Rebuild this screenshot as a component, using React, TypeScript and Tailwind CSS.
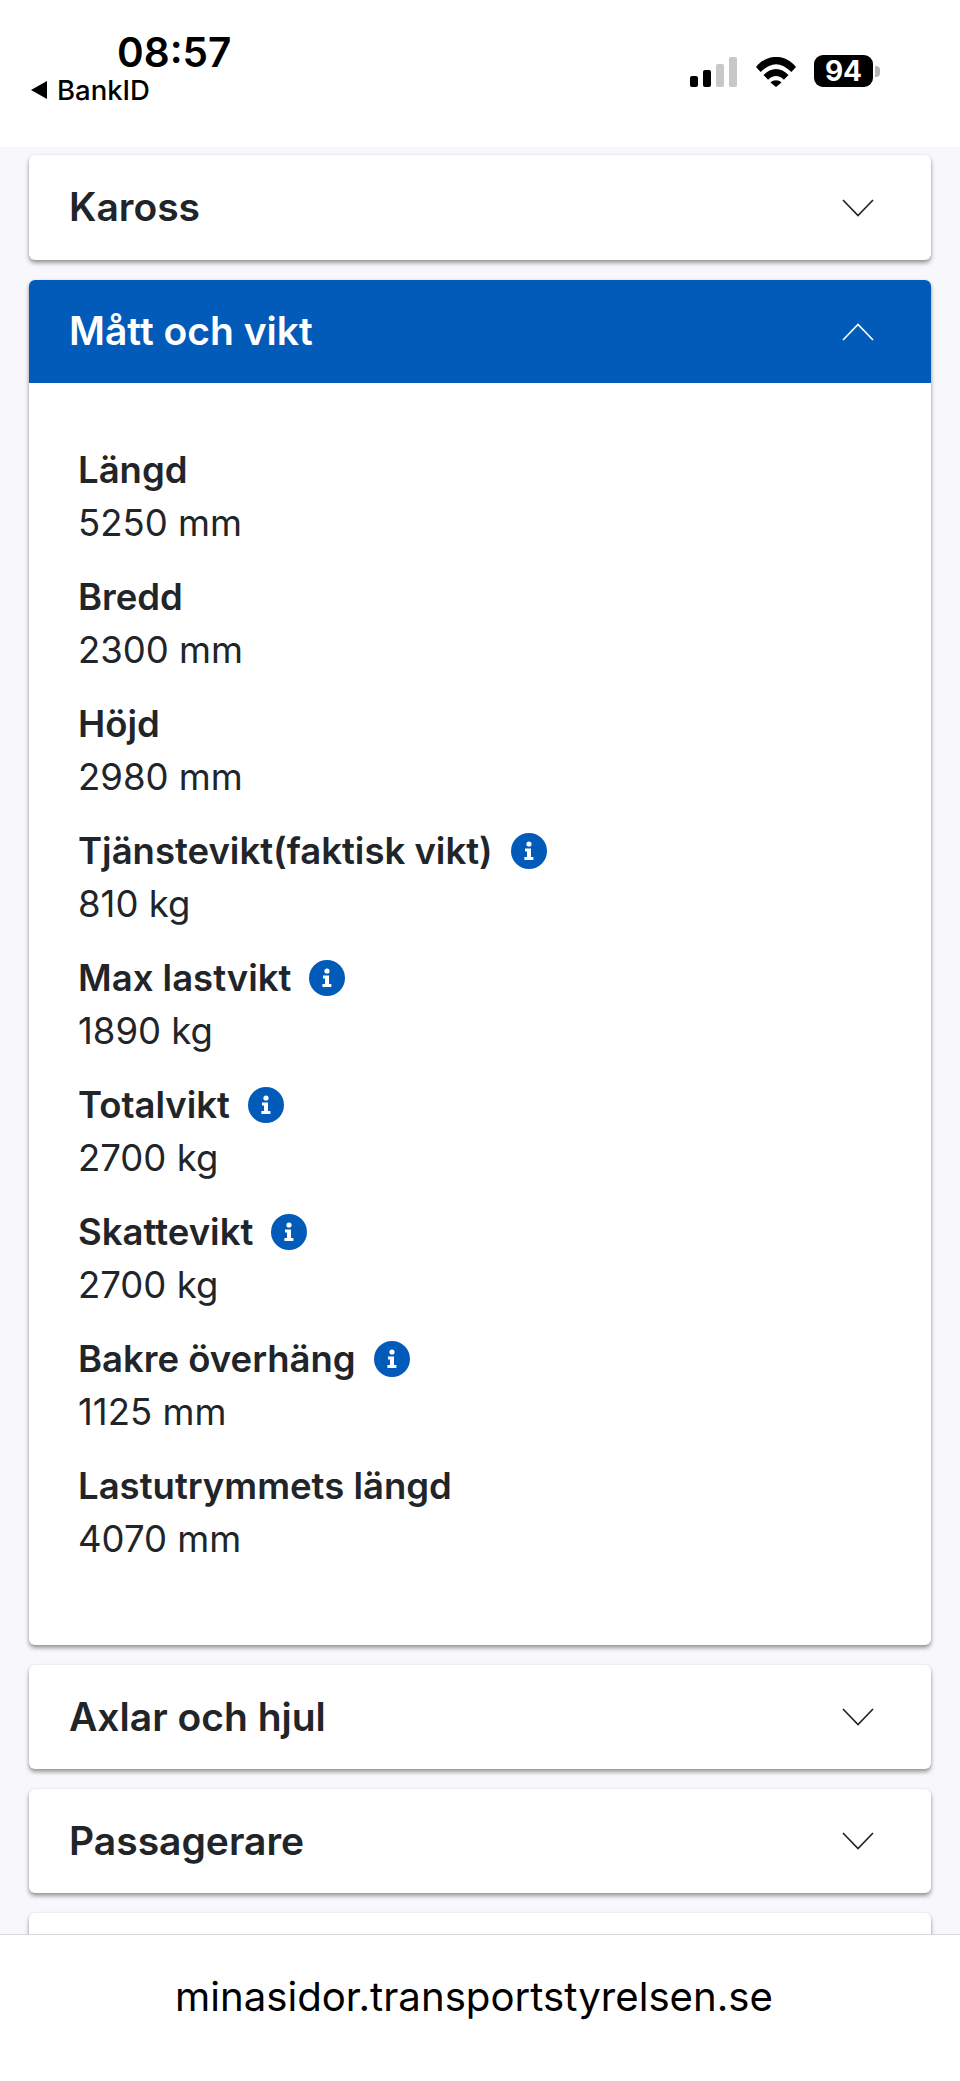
const ROWS = [
  { label: 'Längd', value: '5250 mm' },
  { label: 'Bredd', value: '2300 mm' },
  { label: 'Höjd', value: '2980 mm' },
  { label: 'Tjänstevikt(faktisk vikt)', value: '810 kg', info: true },
  { label: 'Max lastvikt', value: '1890 kg', info: true },
  { label: 'Totalvikt', value: '2700 kg', info: true },
  { label: 'Skattevikt', value: '2700 kg', info: true },
  { label: 'Bakre överhäng', value: '1125 mm', info: true },
  { label: 'Lastutrymmets längd', value: '4070 mm' },
];

function InfoIcon() {
  return (
    <svg viewBox="0 0 36 36" className="ml-[18px] h-[36px] w-[36px] shrink-0">
      <circle cx="18" cy="18" r="18" fill="#025ab9" />
      <circle cx="18" cy="11" r="2.6" fill="#fff" />
      <path d="M14 15.5h6V24h2.4v3h-9v-3H16v-5.5h-2z" fill="#fff" />
    </svg>
  );
}

function Chevron({ up, color }: { up?: boolean; color: string }) {
  return (
    <svg viewBox="0 0 32 18" fill="none" className="h-[18px] w-[32px]">
      <path d={up ? 'M1 17 16 1.500 31 17' : 'M1 1 16 16.500 31 1'} stroke={color} strokeWidth="1.700" />
    </svg>
  );
}

function Collapsed({ title }: { title: string }) {
  return (
    <div className="flex h-[104px] shrink-0 items-center justify-between rounded-[6px] bg-white pl-[40px] pr-[57px] shadow-[0_3px_4px_rgba(0,0,0,0.38),0_0_3px_rgba(0,0,0,0.08)] first:h-[105px]">
      <span className="text-[39px] font-semibold text-[#212529]">{title}</span>
      <Chevron color="#212529" />
    </div>
  );
}

export default function App() {
  return (
    <div className="flex h-[2081px] w-[960px] flex-col overflow-hidden bg-[#f8f8fc] font-['Inter',sans-serif]">
      {/* Status bar */}
      <div className="flex h-[147px] shrink-0 items-start justify-between bg-white pl-[31px] pr-[80px]">
        <div className="pt-[30px]">
          <div className="pl-[86px] text-[40.5px] leading-[46px] font-semibold text-black">08:57</div>
          <div className="-mt-[1px] flex items-center gap-[10px] text-[27.5px] leading-[30px] font-medium text-black">
            <span className="h-0 w-0 border-y-[9px] border-r-[16px] border-y-transparent border-r-black" />
            BankID
          </div>
        </div>
        <div className="flex items-end pt-[55px]">
          <div className="flex items-end gap-[5px]">
            <span className="h-[11px] w-[8px] rounded-[2px] bg-black" />
            <span className="h-[17px] w-[8px] rounded-[2px] bg-black" />
            <span className="h-[23px] w-[8px] rounded-[2px] bg-[#c8c8c8]" />
            <span className="h-[30px] w-[8px] rounded-[2px] bg-[#c8c8c8]" />
          </div>
          <svg viewBox="0 0 40 30" className="ml-[19px] h-[30px] w-[40px]">
            <path d="M0 10C11-3.500 29-3.500 40 10l-4.600 5C25 4.500 15 4.500 4.600 15z" fill="#000" />
            <path d="M7.500 18c7.500-8 17.500-8 25 0l-4.600 4.800c-5-5-10.800-5-15.800 0z" fill="#000" />
            <path d="M14.500 25.500c3-3 8-3 11 0L20 30z" fill="#000" />
          </svg>
          <div className="ml-[18px] flex items-center gap-[2px]">
            <div className="flex h-[32px] w-[59px] items-center justify-center rounded-[9px] bg-black text-[28px] font-bold text-white">94</div>
            <span className="h-[11px] w-[5px] rounded-r-[4px] bg-[#b5b5b5]" />
          </div>
        </div>
      </div>

      {/* Accordion list */}
      <div className="flex min-h-0 flex-1 flex-col gap-[20px] overflow-hidden px-[29px] pt-[8px]">
        <Collapsed title="Kaross" />
        <div className="shrink-0 overflow-hidden rounded-[6px] bg-white shadow-[0_3px_4px_rgba(0,0,0,0.38),0_0_3px_rgba(0,0,0,0.08)]">
          <div className="flex h-[103px] items-center justify-between bg-[#025ab9] pl-[40px] pr-[57px]">
            <span className="text-[39px] font-semibold text-white">Mått och vikt</span>
            <Chevron up color="#ffffff" />
          </div>
          <div className="flex h-[1262px] flex-col pt-[60px] pl-[49px]">
            {ROWS.map(row => (
              <div key={row.label} className="h-[127px] shrink-0">
                <div className="flex h-[54px] items-center text-[36.5px] font-semibold text-[#212529]">
                  {row.label}
                  {row.info && <InfoIcon />}
                </div>
                <div className="text-[36.5px] leading-[52px] text-[#212529]">{row.value}</div>
              </div>
            ))}
          </div>
        </div>
        <Collapsed title="Axlar och hjul" />
        <Collapsed title="Passagerare" />
        <Collapsed title="" />
      </div>

      {/* Safari address bar */}
      <div className="flex h-[147px] shrink-0 items-start justify-center border-t border-[#d8d8d8] bg-white pt-[37px] pr-[12px] text-[40.2px] leading-[50px] text-black">
        minasidor.transportstyrelsen.se
      </div>
    </div>
  );
}
